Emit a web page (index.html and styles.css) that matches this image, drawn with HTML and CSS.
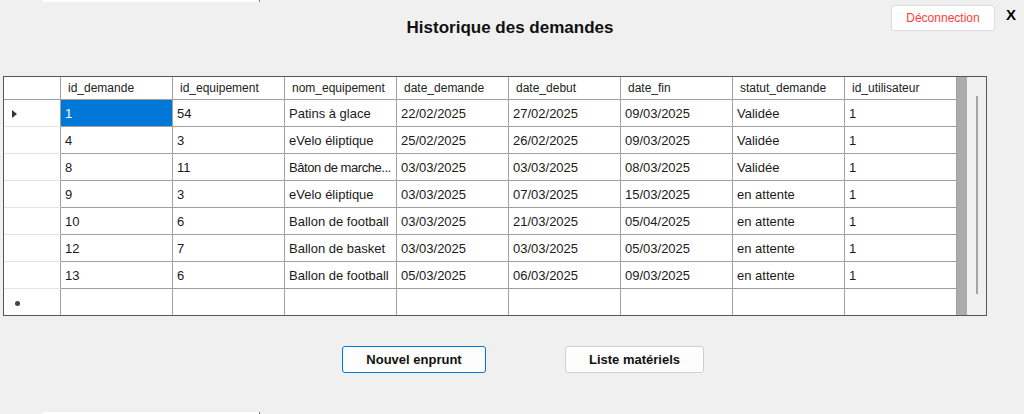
FILE: index.html
```html
<!DOCTYPE html>
<html lang="fr">
<head>
  <meta charset="UTF-8">
  <title>Historique des demandes</title>
  <link rel="stylesheet" href="styles.css">
</head>
<body>
  <div class="edge"></div>

  <header class="topbar">
    <span></span>
    <h1>Historique des demandes</h1>
    <div class="actions">
      <button class="logout">Déconnection</button>
      <span class="close">X</span>
    </div>
  </header>

  <!-- GRILLE -->
  <div class="grid">
    <table>
      <colgroup>
        <col class="c-rh">
        <col class="c-data"><col class="c-data"><col class="c-data"><col class="c-data">
        <col class="c-data"><col class="c-data"><col class="c-data"><col class="c-data">
      </colgroup>
      <thead>
        <tr>
          <th class="rh"></th>
          <th>id_demande</th>
          <th>id_equipement</th>
          <th>nom_equipement</th>
          <th>date_demande</th>
          <th>date_debut</th>
          <th>date_fin</th>
          <th>statut_demande</th>
          <th>id_utilisateur</th>
        </tr>
      </thead>
      <tbody>
        <tr>
          <td class="rh"><span class="arrow"></span></td>
          <td class="selected">1</td><td>54</td><td>Patins à glace</td><td>22/02/2025</td><td>27/02/2025</td><td>09/03/2025</td><td>Validée</td><td>1</td>
        </tr>
        <tr>
          <td class="rh"></td>
          <td>4</td><td>3</td><td>eVelo éliptique</td><td>25/02/2025</td><td>26/02/2025</td><td>09/03/2025</td><td>Validée</td><td>1</td>
        </tr>
        <tr>
          <td class="rh"></td>
          <td>8</td><td>11</td><td class="tight">Bâton de marche...</td><td>03/03/2025</td><td>03/03/2025</td><td>08/03/2025</td><td>Validée</td><td>1</td>
        </tr>
        <tr>
          <td class="rh"></td>
          <td>9</td><td>3</td><td>eVelo éliptique</td><td>03/03/2025</td><td>07/03/2025</td><td>15/03/2025</td><td>en attente</td><td>1</td>
        </tr>
        <tr>
          <td class="rh"></td>
          <td>10</td><td>6</td><td>Ballon de football</td><td>03/03/2025</td><td>21/03/2025</td><td>05/04/2025</td><td>en attente</td><td>1</td>
        </tr>
        <tr>
          <td class="rh"></td>
          <td>12</td><td>7</td><td>Ballon de basket</td><td>03/03/2025</td><td>03/03/2025</td><td>05/03/2025</td><td>en attente</td><td>1</td>
        </tr>
        <tr>
          <td class="rh"></td>
          <td>13</td><td>6</td><td>Ballon de football</td><td>05/03/2025</td><td>06/03/2025</td><td>09/03/2025</td><td>en attente</td><td>1</td>
        </tr>
        <tr class="new-row">
          <td class="rh"><span class="star"></span></td>
          <td></td><td></td><td></td><td></td><td></td><td></td><td></td><td></td>
        </tr>
      </tbody>
    </table>
    <div class="filler"></div>
    <div class="scrollbar"><div class="thumb"></div></div>
  </div>

  <div class="buttons">
    <button class="btn btn-primary">Nouvel enprunt</button>
    <button class="btn">Liste matériels</button>
  </div>

  <div class="edge bottom"></div>
</body>
</html>
```

FILE: styles.css
```css
* {
  box-sizing: border-box;
}

body {
  margin: 0;
  width: 1024px;
  height: 414px;
  overflow: hidden;
  background-color: #f0f0f0;
  font-family: "Liberation Sans", Arial, sans-serif;
  color: #1a1a1a;
  display: flex;
  flex-direction: column;
}

.edge {
  margin-left: 43px;
  width: 217px;
  height: 2px;
  background-color: #fff;
  border-right: 1px solid #7a7a7a;
  flex-shrink: 0;
}

.edge.bottom {
  margin-top: auto;
}

/* EN-TETE */
.topbar {
  height: 74px;
  display: grid;
  grid-template-columns: 1fr auto 1fr;
  align-items: start;
  padding-right: 8px;
  flex-shrink: 0;
}

h1 {
  margin: 15px 0 0 4px;
  font-size: 17px;
  line-height: 21px;
  font-weight: bold;
  color: #111;
}

.actions {
  justify-self: end;
  display: flex;
  align-items: flex-start;
  gap: 11px;
  margin-top: 3px;
}

.logout {
  width: 104px;
  height: 26px;
  background-color: #fff;
  border: 1px solid #dcdcdc;
  border-radius: 3px;
  color: #ff3b3b;
  font-family: "Liberation Sans", Arial, sans-serif;
  font-size: 12px;
  padding: 0;
}

.close {
  font-size: 15px;
  line-height: 16px;
  font-weight: bold;
  color: #000;
  margin-top: 2px;
}

/* GRILLE */
.grid {
  margin-left: 3px;
  width: 984px;
  height: 240px;
  border: 1px solid #555;
  display: flex;
  flex-shrink: 0;
}

table {
  width: 953px;
  table-layout: fixed;
  border-collapse: separate;
  border-spacing: 0;
  background-color: #fff;
  font-size: 12px;
  align-self: flex-start;
}

.c-rh {
  width: 57px;
}

.c-data {
  width: 112px;
}

th, td {
  box-sizing: content-box;
  border-right: 1px solid #a0a0a0;
  border-bottom: 1px solid #a0a0a0;
  text-align: left;
  white-space: nowrap;
  overflow: hidden;
  vertical-align: middle;
}

th {
  height: 22px;
  padding: 0 0 0 7px;
  font-weight: normal;
  color: #222;
}

td {
  padding: 1px 0 0 4px;
  height: 25px;
  font-size: 13px;
}

td.tight {
  letter-spacing: -0.45px;
}

th.rh, td.rh {
  padding: 0 0 0 8px;
  height: 26px;
}

th.rh {
  height: 22px;
}

td.rh {
  border-bottom-color: #e4e4e4;
}

.selected {
  background-color: #0078d7;
  color: #fff;
}

.arrow {
  display: block;
  width: 0;
  height: 0;
  border-left: 5px solid #333;
  border-top: 4px solid transparent;
  border-bottom: 4px solid transparent;
  margin-top: 1px;
}

.star {
  display: block;
  width: 5px;
  height: 5px;
  margin-left: 3px;
  margin-top: 2px;
  border-radius: 50%;
  background-color: #444;
}

.new-row td {
  border-bottom: none;
}

.filler {
  width: 10px;
  background-color: #ababab;
}

.scrollbar {
  width: 19px;
  background-color: #f0f0f0;
  padding: 19px 0 21px 9px;
}

.thumb {
  width: 2px;
  height: 100%;
  background-color: #a6a6a6;
}

/* BOUTONS */
.buttons {
  display: flex;
  gap: 79px;
  margin: 30px 0 0 342px;
}

.btn {
  width: 144px;
  height: 27px;
  background-color: #fdfdfd;
  border: 1px solid #d0d0d0;
  border-radius: 3px;
  font-family: "Liberation Sans", Arial, sans-serif;
  font-size: 13px;
  font-weight: bold;
  color: #111;
  padding: 0;
}

.btn + .btn {
  width: 139px;
}

.btn-primary {
  border-color: #0078d7;
}
```
